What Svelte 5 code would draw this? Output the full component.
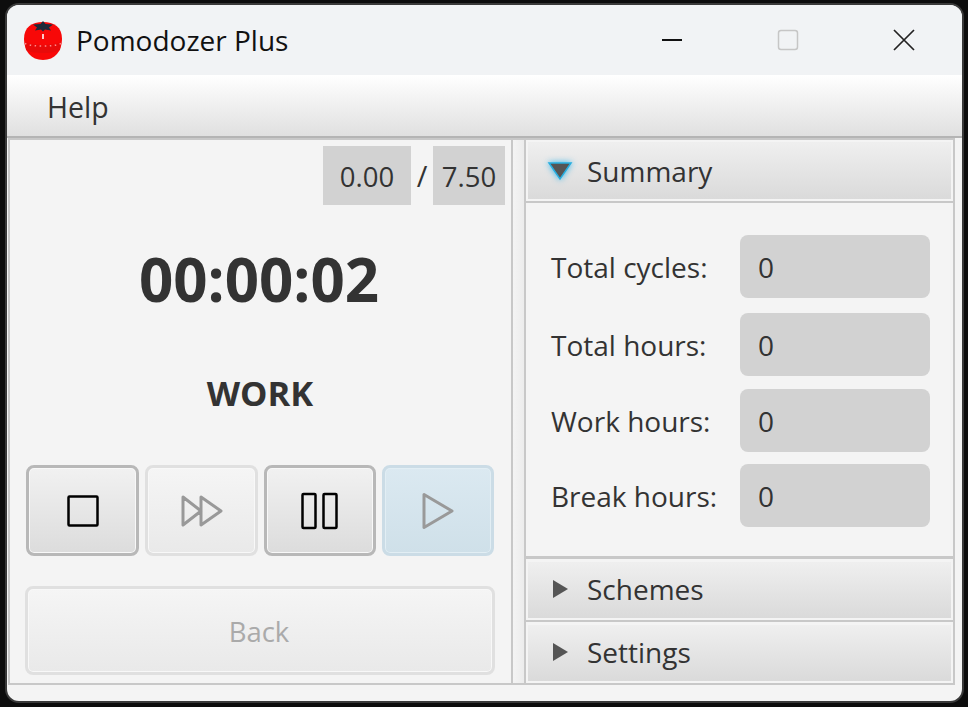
<script>
  const stats = [
    { label: 'Total cycles:', value: '0' },
    { label: 'Total hours:', value: '0' },
    { label: 'Work hours:', value: '0' },
    { label: 'Break hours:', value: '0' }
  ];
</script>

<div class="screen">
  <div class="window">
    <header class="titlebar">
      <svg class="logo" viewBox="0 0 38 39" width="38" height="39">
        <path d="M19 1C30 1 38 6 38 18C38 30 31 39 19 39C7 39 0 30 0 18C0 6 8 1 19 1Z" fill="#f80808" />
        <path d="M1 21C9 25 29 25 37 21L36 29C29 33 9 33 2 29Z" fill="#e80a0a" />
        <path d="M19 0L21.500 3L29 3.500L25 6.500L27 9.500L21 8.500L19 10.500L17 8.500L11 9.500L13 6.500L9 3.500L16.500 3Z" fill="#1e2a3a" />
        <path d="M1 22.500C9 26 29 26 37 22.500" fill="none" stroke="#ff8a8a" stroke-width="1.500" stroke-dasharray="1.500 3.500" />
        <rect x="18" y="13" width="2" height="5" fill="#ffc8c8" />
      </svg>
      <span class="title">Pomodozer Plus</span>
      <div class="controls">
        <span class="ctl"><svg width="22" height="22" viewBox="0 0 22 22"><path d="M1 11H21" stroke="#111" stroke-width="2" /></svg></span>
        <span class="ctl"><svg width="22" height="22" viewBox="0 0 22 22"><rect x="1.500" y="1.500" width="19" height="19" rx="2.500" fill="none" stroke="#c6c6c6" stroke-width="1.500" /></svg></span>
        <span class="ctl"><svg width="22" height="22" viewBox="0 0 22 22"><path d="M1 1L21 21M21 1L1 21" stroke="#222" stroke-width="1.700" /></svg></span>
      </div>
    </header>

    <nav class="menubar"><span class="menu">Help</span></nav>

    <main class="main">
      <section class="left">
        <div class="progress">
          <span class="count first">0.00</span>
          <span class="slash">/</span>
          <span class="count second">7.50</span>
        </div>
        <div class="timer">00:00:02</div>
        <div class="phase">WORK</div>
        <div class="buttons">
          <button class="btn">
            <svg width="34" height="34" viewBox="0 0 34 34"><rect x="2.500" y="2.500" width="29" height="29" rx="1" fill="none" stroke="#000" stroke-width="2.500" /></svg>
          </button>
          <button class="btn off">
            <svg width="44" height="34" viewBox="0 0 44 34"><path d="M3 3L21 17L3 31ZM21 3L41 17L21 31Z" fill="none" stroke="#999" stroke-width="3" stroke-linejoin="round" /></svg>
          </button>
          <button class="btn">
            <svg width="40" height="38" viewBox="0 0 40 38"><rect x="2.500" y="2" width="13" height="34" rx="1" fill="none" stroke="#000" stroke-width="2.500" /><rect x="23.500" y="2" width="13" height="34" rx="1" fill="none" stroke="#000" stroke-width="2.500" /></svg>
          </button>
          <button class="btn active">
            <svg width="32" height="38" viewBox="0 0 32 38"><path d="M2 2.500L30 19L2 35.500Z" fill="none" stroke="#999" stroke-width="3" stroke-linejoin="round" /></svg>
          </button>
        </div>
        <button class="btn off back">Back</button>
      </section>

      <div class="splitter"></div>

      <section class="right">
        <div class="pane-head open">
          <svg class="glow" width="26" height="22" viewBox="0 0 26 22"><path d="M2 3H24L13 19Z" fill="#555" stroke="#27aee0" stroke-width="1.500" /></svg>
          <span>Summary</span>
        </div>
        <div class="pane-body">
          {#each stats as { label, value }}
            <div class="stat">
              <span>{label}</span>
              <span class="stat-value">{value}</span>
            </div>
          {/each}
        </div>
        <div class="pane-head">
          <svg width="26" height="22" viewBox="0 0 26 22"><path d="M1 2L16 11L1 20Z" fill="#555" /></svg>
          <span>Schemes</span>
        </div>
        <div class="pane-head">
          <svg width="26" height="22" viewBox="0 0 26 22"><path d="M1 2L16 11L1 20Z" fill="#555" /></svg>
          <span>Settings</span>
        </div>
      </section>
    </main>
  </div>
</div>

<style>
  :global(body) {
    margin: 0;
    background: #0d0d0d;
  }

  .screen {
    width: 968px;
    height: 707px;
    box-sizing: border-box;
    padding: 3px 4px 4px 5px;
    font-family: "Open Sans", "Noto Sans", sans-serif;
    color: #333;
  }

  .window {
    height: 100%;
    box-sizing: border-box;
    border: 2px solid #3a3a3a;
    border-radius: 14px;
    background: #f4f4f4;
    overflow: hidden;
    display: flex;
    flex-direction: column;
  }

  .titlebar {
    height: 70px;
    flex: none;
    display: flex;
    align-items: center;
    padding-left: 17px;
    background: #f1f3f5;
    color: #111;
  }

  .logo {
    margin-right: 14px;
  }

  .title {
    font-size: 28px;
  }

  .controls {
    margin-left: auto;
    display: flex;
    padding-right: 47px;
    gap: 94px;
  }

  .ctl {
    display: flex;
  }

  .menubar {
    height: 61px;
    flex: none;
    display: flex;
    align-items: center;
    padding-left: 40px;
    background: linear-gradient(#fff, #e0e0e0);
    border-bottom: 2px solid #b4b4b4;
  }

  .menu {
    font-size: 28.500px;
    padding-top: 2px;
  }

  .main {
    flex: none;
    height: 547px;
    box-sizing: border-box;
    margin: 0 7px 0 1px;
    border: 2px solid #c8c8c8;
    display: flex;
  }

  .left {
    width: 501px;
    flex: none;
    display: flex;
    flex-direction: column;
    padding: 6px 6px 0 16px;
    box-sizing: border-box;
  }

  .progress {
    display: flex;
    justify-content: flex-end;
    align-items: center;
    font-size: 27.500px;
  }

  .count {
    height: 59px;
    padding-top: 2px;
    box-sizing: border-box;
    display: flex;
    align-items: center;
    justify-content: center;
    background: #d2d2d2;
  }

  .count.first {
    width: 88px;
  }

  .count.second {
    width: 72px;
  }

  .slash {
    width: 22px;
    text-align: center;
    font-size: 29px;
  }

  .timer {
    text-align: center;
    font-size: 60px;
    font-weight: 700;
    line-height: 70px;
    margin-top: 39px;
    padding-right: 13px;
  }

  .phase {
    text-align: center;
    font-size: 34.500px;
    font-weight: 700;
    line-height: 44px;
    margin-top: 57px;
    padding-right: 11px;
  }

  .buttons {
    display: grid;
    grid-template-columns: 113px 113px 112px 112px;
    gap: 6px;
    margin-top: 50px;
  }

  .btn {
    height: 91px;
    box-sizing: border-box;
    border: 3px solid #b8b8b8;
    border-radius: 8px;
    background: linear-gradient(#f1f1f1, #dcdcdc);
    box-shadow: inset 0 0 0 1px #f8f8f8;
    padding: 0;
    display: flex;
    align-items: center;
    justify-content: center;
  }

  .btn.off {
    border-color: #e0e0e0;
    background: linear-gradient(#f5f5f5, #e9e9e9);
    box-shadow: inset 0 0 0 1px #f8f8f8;
  }

  .btn.active {
    border-color: #cbdce6;
    background: linear-gradient(#dbe9f1, #cfe0e9);
    box-shadow: inset 0 0 0 1px #e2eef4;
  }

  .back {
    width: 470px;
    height: 89px;
    margin-top: 30px;
    margin-left: -1px;
    padding: 2px 2px 0 0;
    font-family: inherit;
    font-size: 27.500px;
    color: #aaa;
  }

  .splitter {
    width: 11px;
    flex: none;
    border-left: 2px solid #c8c8c8;
    border-right: 2px solid #c8c8c8;
    background: linear-gradient(90deg, #f4f4f4, #ececec);
  }

  .right {
    flex: 1;
    min-width: 0;
    display: flex;
    flex-direction: column;
  }

  .pane-head {
    height: 60px;
    flex: none;
    box-sizing: border-box;
    display: flex;
    align-items: center;
    gap: 9px;
    padding-left: 24px;
    padding-bottom: 2px;
    font-size: 28px;
    background: linear-gradient(#efefef, #dadada);
    border: 2px solid #f4f4f4;
    margin-bottom: 3px;
    box-shadow: 0 2px 0 #c8c8c8;
  }

  .pane-head:last-child {
    margin-bottom: 0;
    box-shadow: none;
  }

  .pane-head.open {
    height: 61px;
    padding-left: 19px;
    padding-bottom: 0;
    padding-top: 1px;
    margin-bottom: 3px;
  }

  .glow {
    filter: drop-shadow(0 0 3px #38b6ea);
    margin-right: 5px;
  }

  .pane-body {
    flex: 1;
    display: flex;
    flex-direction: column;
    gap: 13px;
    padding: 31px 23px 0 25px;
    border-bottom: 3px solid #c8c8c8;
    margin-bottom: 1px;
    font-size: 28px;
  }

  .stat {
    display: flex;
    align-items: center;
    justify-content: space-between;
  }

  .stat:nth-child(2) {
    margin-top: 2px;
  }

  .stat:nth-child(4) {
    margin-top: -1px;
  }

  .stat-value {
    width: 190px;
    height: 63px;
    box-sizing: border-box;
    display: flex;
    align-items: center;
    padding-left: 18px;
    background: #d2d2d2;
    border-radius: 8px;
  }
</style>
